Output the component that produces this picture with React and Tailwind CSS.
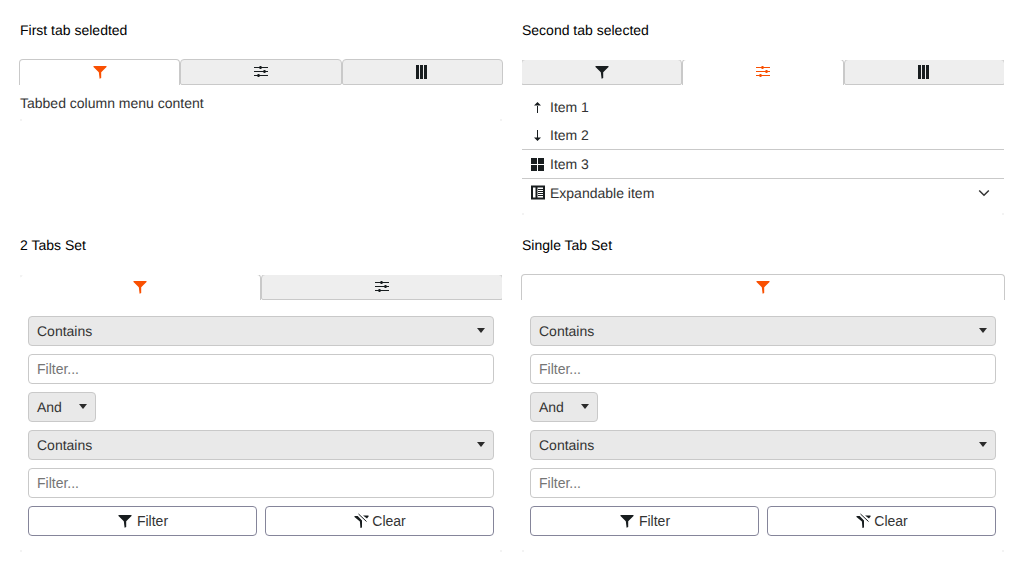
import React from 'react';

const ORANGE = '#f95002';

function FilterIcon({ color = '#181d1f' }) {
  return (
    <svg width="16" height="16" viewBox="0 0 16 16" className="block shrink-0">
      <path d="M1.5 2h13v1L9.2 8.2V14L7.6 14.8 6.8 8.2 1.5 3z" fill={color} />
    </svg>
  );
}

function SlidersIcon({ color = '#181d1f' }) {
  return (
    <svg width="16" height="16" viewBox="0 0 16 16" className="block shrink-0">
      <path d="M1 3.5h14M1 7.5h14M1 11.5h14" stroke={color} strokeWidth="1" fill="none" />
      <path d="M6.5 2h2v3h-2zM10.5 6h2v3h-2zM4.5 10h2v3h-2z" fill={color} />
    </svg>
  );
}

function ColumnsIcon() {
  return (
    <svg width="16" height="16" viewBox="0 0 16 16" className="block shrink-0">
      <path d="M2 1h3v14H2zM6 1h3v14H6zM10 1h3v14h-3z" fill="#181d1f" />
    </svg>
  );
}

function ArrowUp() {
  return (
    <svg width="16" height="16" viewBox="0 0 16 16" className="block shrink-0">
      <path d="M7.5 3L4 6.5h7z M7 6h1v8H7z" fill="#181d1f" />
    </svg>
  );
}

function ArrowDown() {
  return (
    <svg width="16" height="16" viewBox="0 0 16 16" className="block shrink-0">
      <path d="M7.5 14L4 10.5h7z M7 3h1v8H7z" fill="#181d1f" />
    </svg>
  );
}

function GridIcon() {
  return (
    <svg width="16" height="16" viewBox="0 0 16 16" className="block shrink-0">
      <path d="M1 2h6v6H1zM8 2h6v6H8zM1 9h6v6H1zM8 9h6v6H8z" fill="#181d1f" />
    </svg>
  );
}

function PanelIcon() {
  return (
    <svg width="16" height="16" viewBox="0 0 16 16" className="block shrink-0">
      <rect x="2" y="1.5" width="12" height="12" fill="none" stroke="#181d1f" strokeWidth="2" />
      <path d="M5.5 1.5h2v12h-2z" fill="#181d1f" />
      <path d="M8 4.5h5.5M8 6.5h5.5M8 8.5h5.5M8 10.5h5.5" stroke="#181d1f" strokeWidth="1.1" />
    </svg>
  );
}

function ChevronDown() {
  return (
    <svg width="16" height="16" viewBox="0 0 16 16" className="block shrink-0">
      <path d="M3.2 5.5L8 10.2l4.8-4.7" fill="none" stroke="#333333" strokeWidth="1.5" />
    </svg>
  );
}

function ClearIcon() {
  return (
    <svg width="16" height="16" viewBox="0 0 16 16" className="block shrink-0">
      <path d="M1.5 3h3.2L9 7.6V14.5L7.4 15 6.9 8.4 1.5 4z" fill="#181d1f" />
      <path d="M5.5 1l8 7.5" stroke="#181d1f" strokeWidth="1" fill="none" />
      <path d="M10 2.5h5.5v1L14 5.5z" fill="#181d1f" />
    </svg>
  );
}

function Corner({ className }) {
  return <span className={`absolute w-[2px] h-[2px] bg-[#f3f3f3] ${className}`} />;
}

function Tab({ active, children }) {
  return (
    <div
      className={
        active
          ? 'flex-1 h-[26px] flex items-center justify-center bg-white border border-b-0 border-[#c9c9c9] rounded-t-[4px] pb-[1px]'
          : 'flex-1 h-[26px] flex items-center justify-center bg-[#eeeeee] border border-[#c9c9c9] rounded-[4px] rounded-bl-[2px] rounded-br-[2px]'
      }
    >
      {children}
    </div>
  );
}

function Panel({ title, clip, corners = 'bottom', children }) {
  return (
    <div className="flex flex-col">
      <h2 className="h-5 text-sm leading-5 text-black mb-5">{title}</h2>
      <div className={`relative bg-white ${clip ? 'overflow-hidden' : ''}`}>
        {children}
        <Corner className="bottom-0 left-0" />
        <Corner className="bottom-0 right-0" />
        {corners === 'all' && <Corner className="top-0 left-0" />}
      </div>
    </div>
  );
}

function TabRow({ children }) {
  return <div className="flex -mx-px -mt-px">{children}</div>;
}

function SelectBox({ label, wide = true }) {
  return (
    <div
      className={`h-[30px] flex items-center justify-between pl-2 pr-2 border border-[#c9c9c9] rounded-[4px] bg-[#e9e9e9] text-sm text-[#333333] ${wide ? 'w-full' : 'w-[68px]'}`}
    >
      <span>{label}</span>
      <svg width="8" height="5" viewBox="0 0 8 5" className="block shrink-0 -translate-y-px">
        <path d="M0 0h8L4 5z" fill="#2b2b2b" />
      </svg>
    </div>
  );
}

function FilterInput() {
  return (
    <input
      placeholder="Filter..."
      readOnly
      className="h-[30px] w-full px-2 border border-[#c9c9c9] rounded-[4px] bg-white text-sm text-[#333333] placeholder:text-[#757575] outline-none"
    />
  );
}

function ActionButton({ icon, label, gap }) {
  return (
    <button className={`flex-1 h-[30px] flex items-center justify-center ${gap} border border-[#85859a] rounded-[4px] bg-white text-sm text-[#333333]`}>
      {icon}
      {label}
    </button>
  );
}

function FilterForm() {
  return (
    <div className="flex flex-col gap-2 px-2 pt-4 pb-4">
      <SelectBox label="Contains" />
      <FilterInput />
      <SelectBox label="And" wide={false} />
      <SelectBox label="Contains" />
      <FilterInput />
      <div className="flex gap-2">
        <ActionButton icon={<FilterIcon />} label="Filter" gap="gap-[4px]" />
        <ActionButton icon={<ClearIcon />} label="Clear" gap="gap-[3px]" />
      </div>
    </div>
  );
}

function MenuItem({ icon, label, border, trailing }) {
  return (
    <div className={`flex items-center h-7 text-sm text-[#333333] pl-2 box-content ${border ? 'border-t border-[#c9c9c9]' : ''}`}>
      <span className="w-5 flex">{icon}</span>
      <span className="flex-1">{label}</span>
      {trailing && <span className="mr-3">{trailing}</span>}
    </div>
  );
}

export default function App() {
  return (
    <div className="min-h-screen bg-white px-5 pt-5 font-['Liberation_Sans',Arial,sans-serif] [text-rendering:geometricPrecision]">
      <div className="grid grid-cols-2 gap-x-5 gap-y-5">
        <Panel title="First tab seledted">
          <TabRow>
            <Tab active><FilterIcon color={ORANGE} /></Tab>
            <Tab><SlidersIcon /></Tab>
            <Tab><ColumnsIcon /></Tab>
          </TabRow>
          <div className="pt-2 pb-2 text-sm leading-5 text-[#333333]">Tabbed column menu content</div>
        </Panel>

        <Panel title="Second tab selected" clip>
          <TabRow>
            <Tab><FilterIcon /></Tab>
            <Tab active><SlidersIcon color={ORANGE} /></Tab>
            <Tab><ColumnsIcon /></Tab>
          </TabRow>
          <div className="pt-2 pb-2">
            <MenuItem icon={<ArrowUp />} label="Item 1" />
            <MenuItem icon={<ArrowDown />} label="Item 2" />
            <MenuItem icon={<GridIcon />} label="Item 3" border />
            <MenuItem icon={<PanelIcon />} label="Expandable item" border trailing={<ChevronDown />} />
          </div>
        </Panel>

        <Panel title="2 Tabs Set" clip corners="all">
          <TabRow>
            <Tab active><FilterIcon color={ORANGE} /></Tab>
            <Tab><SlidersIcon /></Tab>
          </TabRow>
          <FilterForm />
        </Panel>

        <Panel title="Single Tab Set">
          <TabRow>
            <Tab active><FilterIcon color={ORANGE} /></Tab>
          </TabRow>
          <FilterForm />
        </Panel>
      </div>
    </div>
  );
}
